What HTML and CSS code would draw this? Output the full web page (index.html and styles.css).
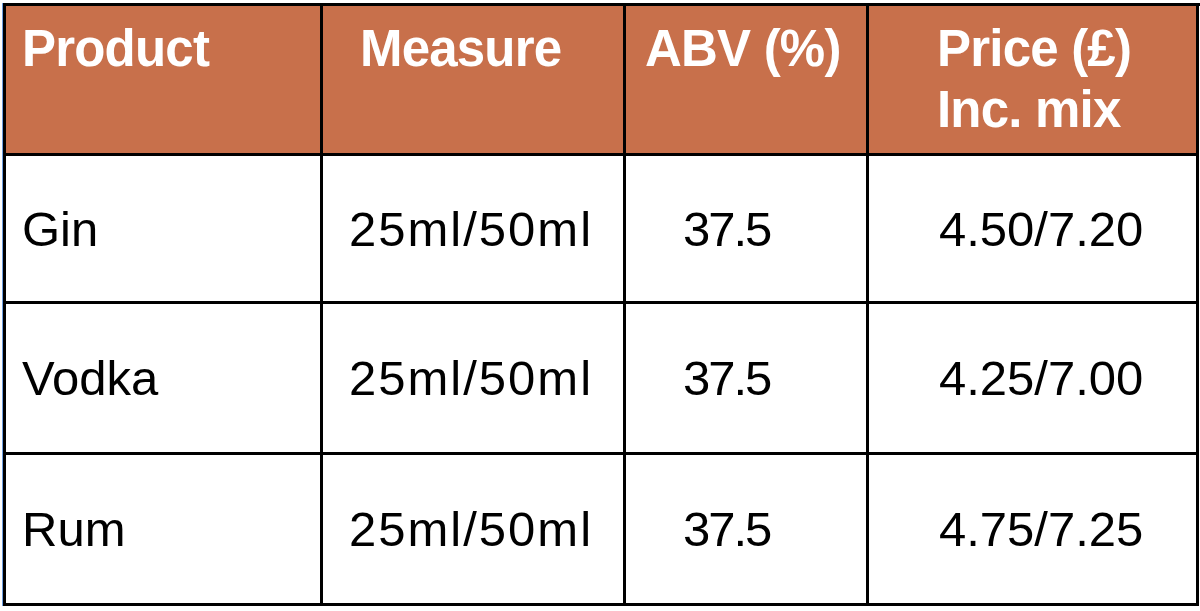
FILE: index.html
```html
<!DOCTYPE html>
<html lang="en">
<head>
<meta charset="utf-8">
<title>Spirits price list</title>
<link rel="stylesheet" href="styles.css">
</head>
<body>
<div class="price-table">
  <div class="cell head c1">Product</div>
  <div class="cell head c2">Measure</div>
  <div class="cell head c3">ABV (%)</div>
  <div class="cell head c4">Price (£)<br>Inc. mix</div>

  <div class="cell body c1 r1">Gin</div>
  <div class="cell body c2 r1 measure">25ml/50ml</div>
  <div class="cell body c3 r1">37.5</div>
  <div class="cell body c4 r1">4.50/7.20</div>

  <div class="cell body c1 r2">Vodka</div>
  <div class="cell body c2 r2 measure">25ml/50ml</div>
  <div class="cell body c3 r2">37.5</div>
  <div class="cell body c4 r2">4.25/7.00</div>

  <div class="cell body c1 r3">Rum</div>
  <div class="cell body c2 r3 measure">25ml/50ml</div>
  <div class="cell body c3 r3">37.5</div>
  <div class="cell body c4 r3">4.75/7.25</div>
</div>
</body>
</html>
```
FILE: styles.css
```css
html, body {
  margin: 0;
  padding: 0;
  background: #ffffff;
}

body {
  font-family: "Liberation Sans", Arial, Helvetica, sans-serif;
  color: #000000;
}

.price-table {
  margin: 3px 0 0 3px;
  width: 1196px;
  display: grid;
  grid-template-columns: 317px 303px 243px 330px;
  grid-template-rows: 150px 148px 151px 151px;
  border-left: 3px solid #000;
  border-top: 3px solid #000;
  box-shadow: -1px 0 0 #6f9fe0;
}

.cell {
  border-right: 3px solid #000;
  border-bottom: 3px solid #000;
  box-sizing: border-box;
}

.head {
  background: #c8704b;
  color: #ffffff;
  font-weight: bold;
  font-size: 51px;
  letter-spacing: -0.8px;
  line-height: 61px;
  padding-top: 12px;
}

.body {
  display: flex;
  align-items: center;
  font-size: 49px;
  line-height: normal;
}

.measure {
  letter-spacing: 2px;
}

.head.c1 { padding-left: 16px; }
.head.c2 { padding-left: 37px; }
.head.c3 { padding-left: 19px; }
.head.c4 { padding-left: 68px; }

.body.c1 { padding-left: 16px; }
.body.c2 { padding-left: 26px; }
.body.c3 { padding-left: 57px; letter-spacing: -2px; }
.body.c4 { padding-left: 70px; }
```
